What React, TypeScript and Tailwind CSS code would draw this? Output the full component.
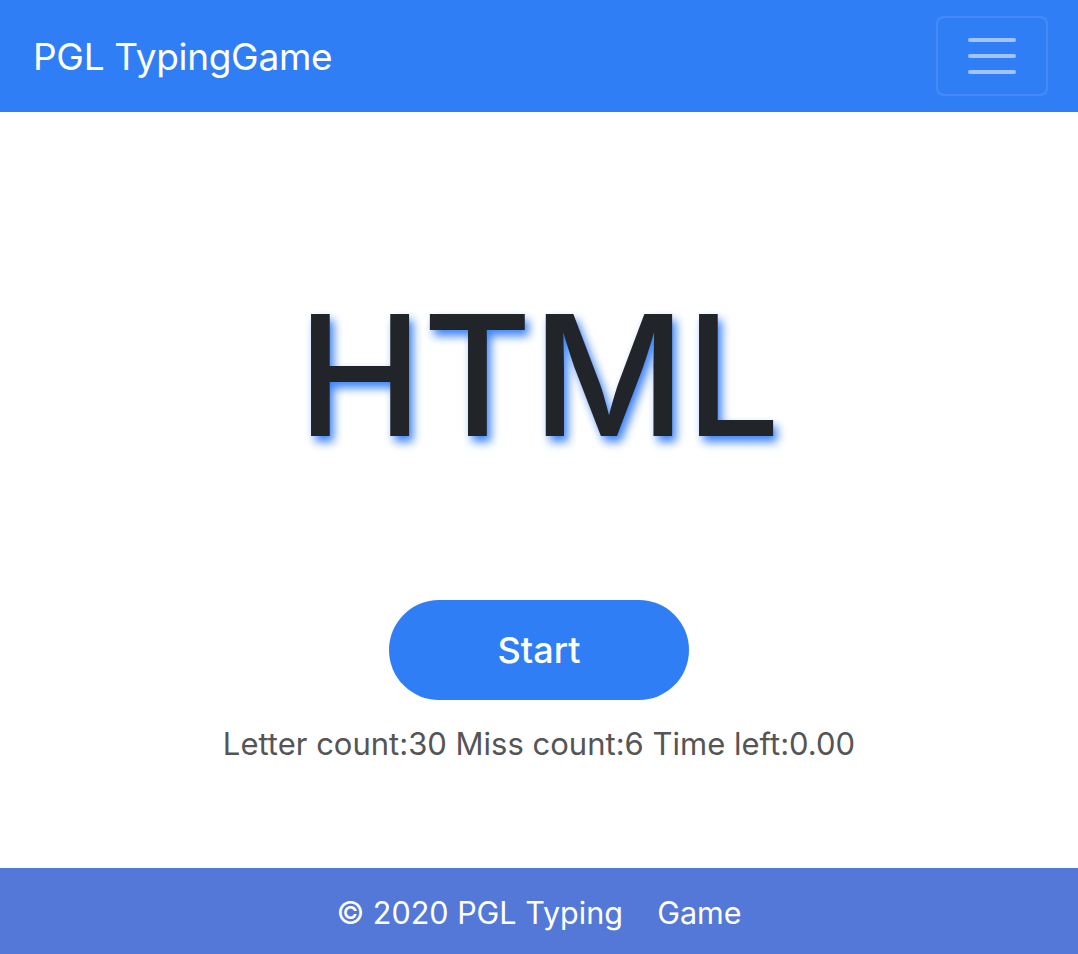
import React from 'react'

function App() {
  const stats = { letters: 30, misses: 6, timeLeft: '0.00' }

  return (
    <div className="flex min-h-[954px] flex-col bg-white font-['Inter','Liberation_Sans',sans-serif]">
      {/* navbar */}
      <nav className="flex h-[112px] items-center justify-between bg-[#2f7ef6] pl-[33px] pr-[30px]">
        <span className="text-[37px] leading-none tracking-[-0.3px] text-white">PGL TypingGame</span>
        <button className="flex h-[80px] w-[112px] flex-col items-center justify-center gap-[12px] rounded-[8px] border-2 border-white/10">
          <span className="block h-[4px] w-[48px] rounded-full bg-white/55" />
          <span className="block h-[4px] w-[48px] rounded-full bg-white/55" />
          <span className="block h-[4px] w-[48px] rounded-full bg-white/55" />
        </button>
      </nav>

      {/* game */}
      <main className="flex flex-1 flex-col items-center">
        <h1 className="mt-[179px] text-[168px] font-medium leading-none tracking-normal text-[#212529] [text-shadow:4px_6px_10px_#3b82f6]">
          HTML
        </h1>
        <button className="mt-[141px] h-[100px] w-[300px] rounded-full bg-[#2f7ef6] text-[36px] font-medium text-white">
          Start
        </button>
        <p className="mt-[28px] text-[31px] leading-none text-[#555]">
          Letter count:{stats.letters} Miss count:{stats.misses} Time left:{stats.timeLeft}
        </p>
      </main>

      {/* footer */}
      <footer className="flex h-[86px] items-center justify-center bg-[#5478d8] pt-[3px] text-[30.5px] text-white">
        © 2020 PGL Typing&nbsp;&nbsp;&nbsp; Game
      </footer>
    </div>
  )
}

export default App
